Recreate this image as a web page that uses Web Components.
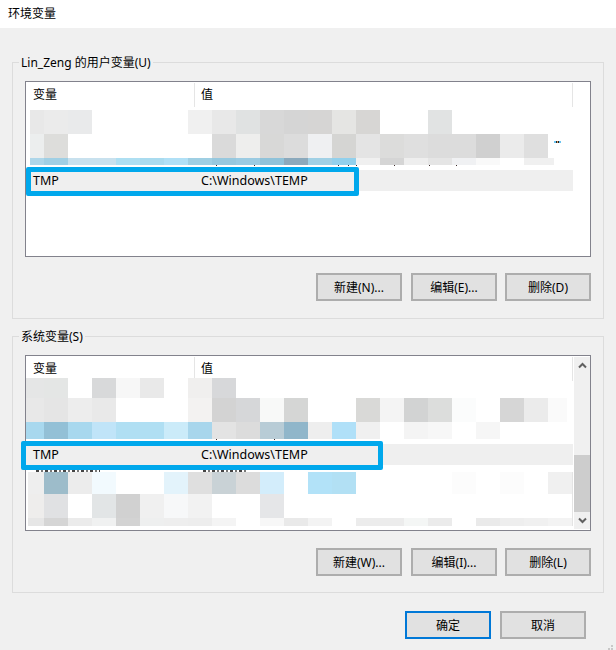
<!DOCTYPE html>
<html><head><meta charset="utf-8">
<style>
html,body{margin:0;padding:0;background:#f0f0f0}
body{font:12px "Noto Sans","Noto Sans CJK SC",sans-serif;color:#000;width:616px;height:650px;overflow:hidden}
</style></head>
<body>
<env-dialog>
  <var-group label="Lin_Zeng 的用户变量(U)" list="user" style="--btn-gap:16px">
    <win-btn slot="b">新建(N)...</win-btn><win-btn slot="b">编辑(E)...</win-btn><win-btn slot="b">删除(D)</win-btn>
  </var-group>
  <var-group label="系统变量(S)" list="sys">
    <win-btn slot="b">新建(W)...</win-btn><win-btn slot="b">编辑(I)...</win-btn><win-btn slot="b">删除(L)</win-btn>
  </var-group>
</env-dialog>
<script>
const _=null;
const U1=[
 {h:24,x:30,c:[[14,'#e8e8e8'],[24,'#ebebeb'],[24,'#e9eaeb'],[96,_],[24,'#f0f0f0'],[24,'#e8e8e8'],[24,'#e0e2e2'],[24,'#d8d8d8'],[24,'#d5d5d5'],[24,'#d6d5d4'],[24,'#e5e5e3'],[24,'#d7d6d4'],[48,_],[24,'#e1e3e3']]},
 {h:24,x:30,c:[[14,'#eceeee'],[24,'#dddddb'],[144,_],[24,'#dadada'],[24,'#eeeeed'],[24,'#d8d8d7'],[24,'#dcdcdc'],[24,'#eff0f2'],[24,'#d5d5d3'],[24,'#e4e4e4'],[24,'#dcdcdb'],[24,'#dfdfdf'],[24,'#dcdcdc'],[24,'#dcdcdc'],[24,'#d0d0d0'],[24,'#ebebeb'],[24,'#dfdfdf']]},
 {h:7,x:30,c:[[14,'#aed6e9'],[24,'#a0cfe4'],[48,'#c8e1ee'],[24,'#aedff2'],[24,'#a9dbef'],[24,'#b0e0f6'],[24,'#9fcfe3'],[24,'#97c8de'],[24,'#9bcbe2'],[24,'#8fc2d9'],[24,'#8ba9bc'],[24,'#a0d0e5'],[24,'#92d0ec'],[24,'#f0f0f0'],[24,'#d5d5d5'],[24,'#eeeeee'],[24,'#e5e5e5'],[24,'#f0f1f3'],[24,'#f9f9f9'],[24,_],[30,'#f0f0f0']]}
];
const S1=[
 {h:20,x:26,c:[[18,'#e5e6e6'],[24,'#e4e6e5'],[24,_],[24,'#d8d9da'],[24,'#f7f7f7'],[24,'#e9e9e9'],[24,_],[24,'#f0efee'],[24,'#d7d8da']]},
 {h:24,x:26,c:[[18,'#e8e8e8'],[24,'#e5e5e5'],[24,'#ededed'],[24,'#e9e9e9'],[72,_],[24,'#f3f2f1'],[24,'#d3d3d3'],[24,'#d6d7d9'],[24,'#f8f9f8'],[24,'#d5d6d5'],[48,_],[24,'#d9d9d7'],[24,'#f4f4f4'],[24,'#d2d3d3'],[24,'#dcdddc'],[24,'#fbfcfc'],[24,_],[24,'#d6d6d6'],[24,'#ebebeb'],[19,'#fafafa']]},
 {h:17,x:26,c:[[18,'#a8d8ee'],[24,'#93c0d6'],[24,'#a8d8ee'],[24,'#c0e4f8'],[48,'#b0dff3'],[24,'#cbebf9'],[24,'#a8d6ec'],[24,'#e3e3e3'],[24,'#dcdcdc'],[24,'#b8ccd6'],[24,'#90b6ca'],[24,'#eeeeee'],[24,'#b0e0f8'],[24,'#f0f0f0'],[24,_],[24,'#f4f4f4'],[24,'#f7f7f7'],[24,_],[24,'#f6f6f6']]}
];
const S2=[
 {h:22,x:28,e:1,c:[[16,'#eeeeee'],[24,'#9dbcca'],[24,'#ececec'],[24,'#f2fafe'],[48,_],[24,'#e3f3fb'],[24,'#dfdfdf'],[24,'#c9d2d6'],[24,'#dcdcdc'],[24,'#d3edfb'],[24,_],[24,'#b2e2f8'],[24,'#b2e0f4'],[96,_],[24,'#fcfcfc'],[24,_],[24,'#fcfcfc'],[24,_],[24,'#f0f0f0']]},
 {h:24,x:28,e:1,c:[[16,'#eeedec'],[24,'#e0e1e3'],[24,_],[24,'#e2e5e6'],[24,'#d1d1d1'],[24,'#f0f0f0'],[24,'#f7f8f9'],[24,'#f2f2f2'],[48,_],[24,'#e5e6e8'],[288,_]]},
 {h:8,x:28,e:1,c:[[16,'#e6e6e6'],[24,'#d5d5d5'],[24,'#ebebeb'],[24,'#f0f1f1'],[24,'#d3d3d3'],[24,'#eeefef'],[24,'#eeeeee'],[24,'#ededed'],[24,'#f4f4f4'],[24,_],[24,'#f7f7f7'],[24,'#e9e9e9'],[24,'#f3f3f3'],[24,_],[48,'#ececec'],[24,'#f4f6f5'],[24,'#ebebeb'],[24,_],[24,'#eaeaea'],[24,'#eeeeee'],[24,'#f0f0f0'],[24,'#f3f3f3']]}
];
const LISTS={
 user:{head:28,before:U1,gap:5,specks:[216,254,338,348,356,394,429,456],dots:1,after:[],hl:{l:0,r:358.5,t:-3,b:-4.5},bar:false},
 sys:{head:22,before:S1,gap:5,specks:[216,274],after:S2,hl:{l:-5,r:383,t:-3,b:-5},bar:true,tail:7}
};

class WinBtn extends HTMLElement{
 constructor(){super();this.attachShadow({mode:'open'}).innerHTML=`<style>
 :host{display:flex;align-items:center;justify-content:center;box-sizing:border-box;width:86px;height:28px;background:#e1e1e1;border:2px solid #adadad;font-size:12px;color:#000;white-space:nowrap}
 :host([primary]){border-color:#0078d7}
 </style><slot></slot>`;}
}
customElements.define('win-btn',WinBtn);

class PixelRow extends HTMLElement{
 connectedCallback(){
  const d=this.data;
  const s=this.attachShadow({mode:'open'});
  s.innerHTML=`<style>:host{display:flex;flex:none;height:${d.h}px;padding-left:${d.x-26}px}
  i{display:block;flex:none;height:100%}</style>`+
  d.c.map(([w,c])=>`<i style="width:${w}px;background:${c||'transparent'}"></i>`).join('')+
  (d.e?`<i style="width:1px;background:#e4e4e4"></i>`:'');
 }
}
customElements.define('pixel-row',PixelRow);

class SelectedRow extends HTMLElement{
 connectedCallback(){
  const h=this.hl;
  const s=this.attachShadow({mode:'open'});
  s.innerHTML=`<style>
  :host{display:flex;align-items:center;flex:none;position:relative;height:21px;background:#efefef;width:547px;box-sizing:border-box;font-size:12.5px;line-height:21px;white-space:nowrap}
  .n{width:175px;padding-left:7px;box-sizing:border-box}
  .hl{position:absolute;left:${h.l}px;width:${h.r-26-h.l}px;top:${h.t}px;bottom:${h.b}px;box-sizing:border-box;border:5px solid #00a8ec;border-radius:2px}
  </style><span class="n"><slot name="n"></slot></span><span><slot name="v"></slot></span><span class="hl"></span>`;
 }
}
customElements.define('selected-row',SelectedRow);

class VarList extends HTMLElement{
 connectedCallback(){
  const d=LISTS[this.getAttribute('kind')];
  const s=this.attachShadow({mode:'open'});
  s.innerHTML=`<style>
  :host{display:flex;flex:none;box-sizing:border-box;height:176px;background:#fff;border:1px solid #82828c}
  .main{flex:none;width:548px;display:flex;flex-direction:column;min-width:0}
  .head{flex:none;display:flex;height:${d.head}px;font-size:12px;line-height:24px}
  .c1{width:168px;box-sizing:border-box;padding-left:7px;height:24px}
  .c2{flex:1;box-sizing:border-box;padding-left:6px;height:24px}
  .c1,.c2{margin-top:1px}
  .d1{flex:none;width:1px;height:24px;background:#e5e5e5;margin-top:1px}
  .d2{flex:none;width:1px;height:24px;background:#e5e5e5;margin:1px 1px 0 0}
  .gap{flex:none;height:${d.gap}px;position:relative;display:flex}
  .gap b{position:absolute;top:0;width:1px;height:1px;background:#3a2a2a}
  .tail{flex:none;height:7px;position:relative}
  .tail b{position:absolute;top:5px;height:2px;background:repeating-linear-gradient(90deg,#444 0 3px,transparent 3px 5px,#777 5px 7px,transparent 7px 9px)}
  .bar{flex:none;width:16px;margin:1px 0;background:#f0f0f0;display:flex;flex-direction:column;align-items:center;justify-content:space-between}
  .arrow{flex:none;height:17px;display:flex;align-items:center;justify-content:center}
  .track{flex:1;width:100%;display:flex;flex-direction:column;justify-content:flex-end}
  .thumb{height:57px;background:#cdcdcd}
  </style>
  <div class="main">
   <div class="head"><span class="c1">变量</span><span class="d1"></span><span class="c2">值</span><span class="d2"></span></div>
   <div id="rows" style="display:flex;flex-direction:column"></div>
  </div>
  ${d.bar?`<div class="bar">
    <div class="arrow"><svg width="9" height="7" viewBox="0 0 9 7"><path d="M1 5.5 4.5 2 8 5.5" fill="none" stroke="#606060" stroke-width="2"/></svg></div>
    <div class="track"><div class="thumb"></div></div>
    <div class="arrow"><svg width="9" height="7" viewBox="0 0 9 7"><path d="M1 1.5 4.5 5 8 1.5" fill="none" stroke="#606060" stroke-width="2"/></svg></div>
  </div>`:''}`;
  const r=s.getElementById('rows');
  d.before.forEach(x=>{const p=document.createElement('pixel-row');p.data=x;r.append(p);});
  const g=document.createElement('div');g.className='gap';
  g.innerHTML=d.specks.map(x=>`<b style="left:${x-26}px"></b>`).join('');
  if(d.dots){g.innerHTML+=`<b style="left:${554-26}px;top:-24px;width:7px;height:2px;background:repeating-linear-gradient(90deg,#6cc4f0 0 2px,#222 2px 3px,#c96 3px 4px,#222 4px 5px,#6cc4f0 5px 7px)"></b>`;}
  r.append(g);
  const sel=document.createElement('selected-row');sel.hl=d.hl;
  sel.innerHTML=`<span slot="n">TMP</span><span slot="v">C:\\Windows\\TEMP</span>`;
  r.append(sel);
  if(d.tail){
   const t=document.createElement('div');t.className='tail';
   t.innerHTML=`<b style="left:10px;width:64px"></b><b style="left:177px;width:45px"></b>`;
   r.append(t);
  }
  d.after.forEach(x=>{const p=document.createElement('pixel-row');p.data=x;r.append(p);});
 }
}
customElements.define('var-list',VarList);

class VarGroup extends HTMLElement{
 constructor(){super();
  const l=this.getAttribute('label')||'',k=this.getAttribute('list')||'';
  this.attachShadow({mode:'open'}).innerHTML=`<style>
  :host{display:flex;flex-direction:column;box-sizing:border-box;width:592px;height:257px;border:1px solid #dcdcdc;padding:0 12px}
  .lg{align-self:flex-start;height:18px;line-height:18px;margin:-9px 0 9px -6px;padding:0 2px;background:#f0f0f0;font-size:12px;white-space:nowrap}
  .btns{display:flex;justify-content:flex-end;margin-top:var(--btn-gap,17px);gap:8px}
  ::slotted(win-btn:first-child){margin-right:1px}
  </style><div class="lg">${l}</div><var-list kind="${k}"></var-list><div class="btns"><slot name="b"></slot></div>`;
 }
}
customElements.define('var-group',VarGroup);

class EnvDialog extends HTMLElement{
 constructor(){super();
  this.attachShadow({mode:'open'}).innerHTML=`<style>
  :host{display:flex;flex-direction:column;width:616px;height:650px;position:relative;background:#f0f0f0}
  .title{flex:none;height:28px;background:#fff;box-sizing:border-box;padding-left:8px;font-size:12px;line-height:27px}
  .body{flex:none;display:flex;flex-direction:column;gap:17px;padding:34px 0 0 12px}
  .foot{flex:none;display:flex;justify-content:flex-end;gap:9px;padding:18px 30px 0 0}
  .grip{position:absolute;right:3px;bottom:0}
  </style><div class="title">环境变量</div><div class="body"><slot></slot></div>
  <div class="foot"><win-btn primary>确定</win-btn><win-btn>取消</win-btn></div>
  <svg class="grip" width="5" height="5" viewBox="0 0 5 5" fill="#c8c8c8"><rect x="3" y="0" width="2" height="2"/><rect x="0" y="3" width="2" height="2"/><rect x="3" y="3" width="2" height="2"/></svg>`;
 }
}
customElements.define('env-dialog',EnvDialog);
</script>
</body></html>
